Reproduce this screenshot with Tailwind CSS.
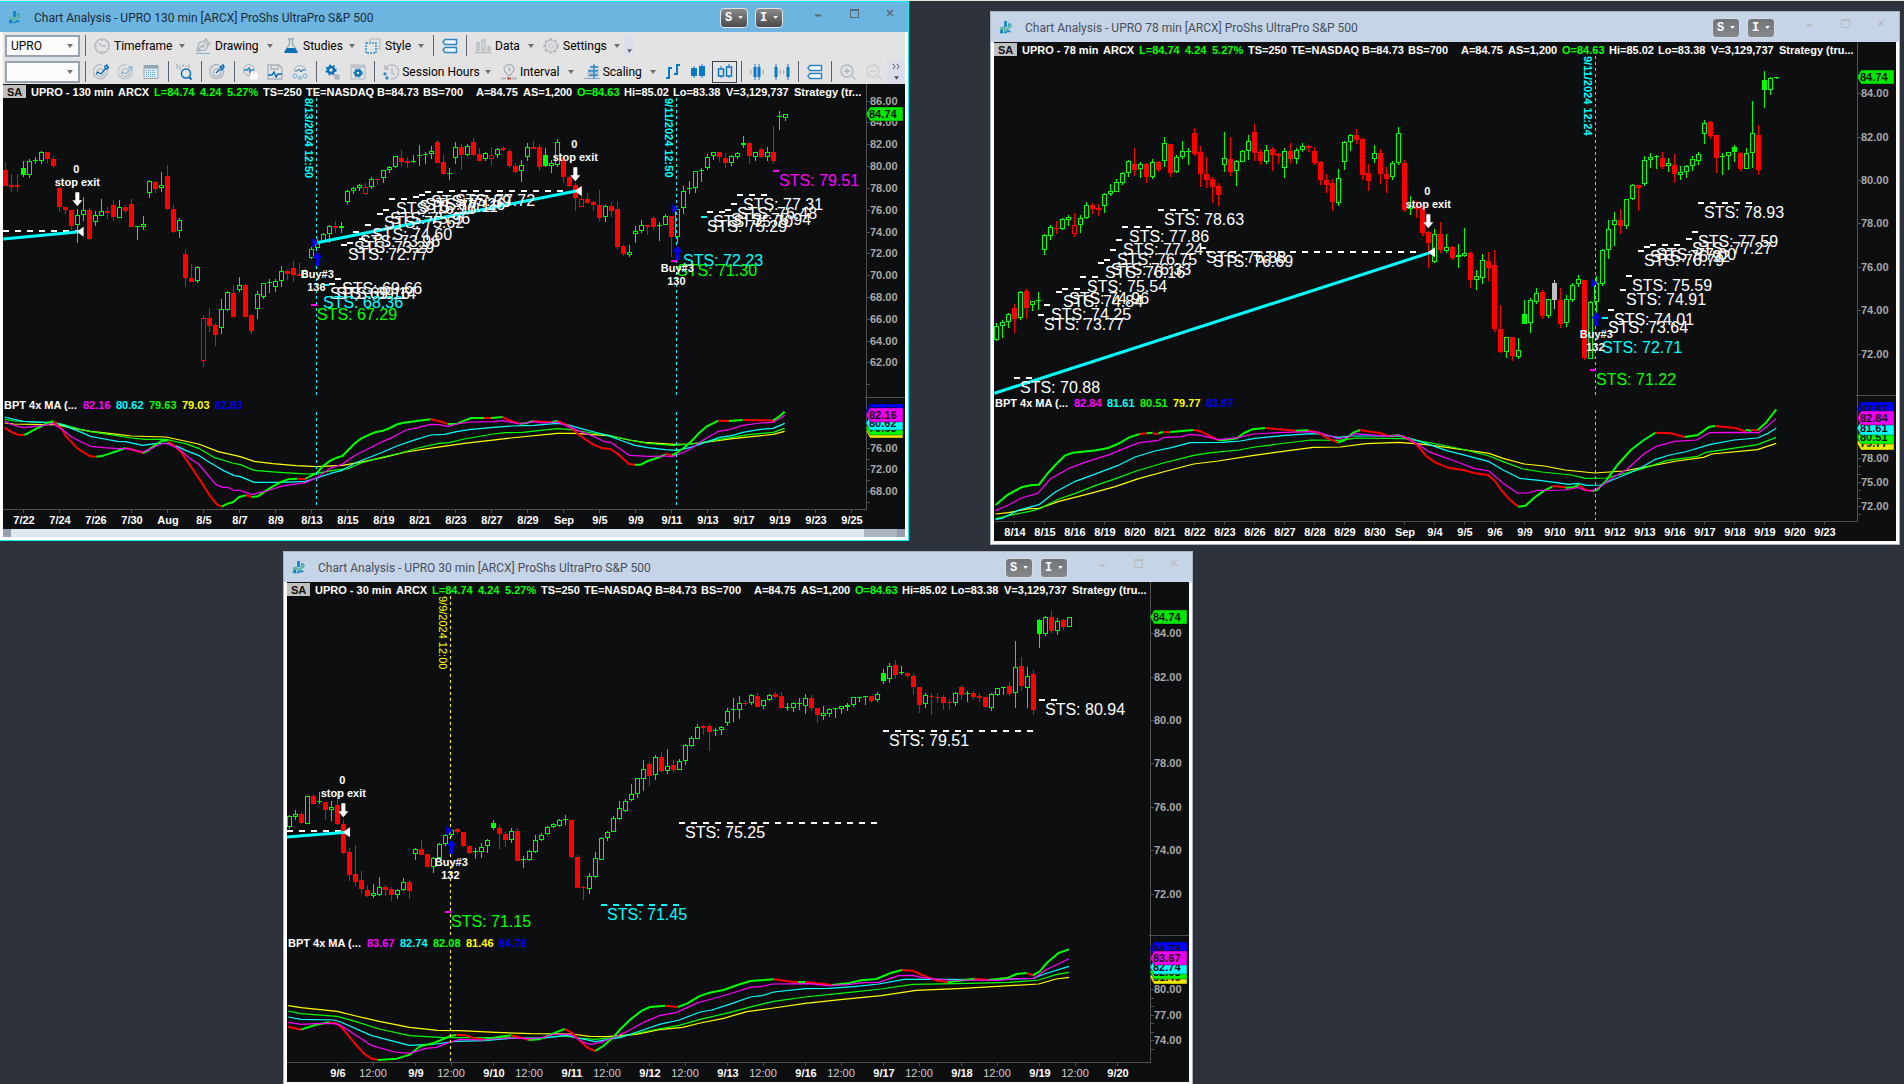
<!DOCTYPE html>
<html lang="en">
<head>
  <meta charset="UTF-8" />
  <meta name="viewport" content="width=device-width, initial-scale=1.0">
  <title>Chart Analysis - UPRO</title>
  <script src="https://cdn.jsdelivr.net/npm/@tailwindcss/browser@4"></script>
</head>
<body class="relative min-h-screen overflow-hidden bg-[#2e323b] border-t border-[#e4e4dc] font-[Roboto,'Noto_Sans',sans-serif] text-xs text-black">

  <svg width="0" height="0" class="absolute">
    <symbol id="logo" viewBox="0 0 16 16">
      <path d="M3 9v5M7.500 1v7M7.500 12v3M12 4v5" stroke="#0a84c8" stroke-width="3" fill="none"/>
      <path d="M1 10l4-1 3 3 6-7" stroke="#5fb8a8" stroke-width="3" fill="none"/>
      <path d="M9 13h4M1 14h4" stroke="#0a84c8" stroke-width="2"/>
    </symbol>
    <symbol id="down" viewBox="0 0 6 4"><path d="M0 0h6L3 4z" fill="currentColor"/></symbol>
    <symbol id="rows" viewBox="0 0 16 16">
      <path d="M3 1.500h11.500v5H3L1 4zM3 9.500h11.500v5H3L1 12z" fill="#f4f8fb" stroke="#2f86c0" stroke-width="1.500"/>
    </symbol>
  </svg>

  <!-- 130 min -->
  <section class="absolute left-0 top-0 w-[909px] border-t border-r border-b border-[#00f4f8] bg-white pb-[3px]">
    <header class="flex h-[30px] items-center bg-[#6cb5e0] pl-2">
      <svg class="size-[14px]"><use href="#logo"/></svg>
      <h1 class="ml-3 pt-px text-[#1c2a38]">Chart Analysis - UPRO 130 min [ARCX] ProShs UltraPro S&amp;P 500</h1>
      <div class="ml-auto flex items-center gap-[7px] pt-px">
        <button class="flex h-5 w-7 items-center justify-center gap-[6px] rounded-sm border border-[#e0e4e8] bg-gradient-to-b from-[#8a8a8a] to-[#4a4a4a] font-['Liberation_Mono',monospace] font-bold text-white">S<svg class="h-[3px] w-[5px]"><use href="#down"/></svg></button>
        <button class="flex h-5 w-7 items-center justify-center gap-[6px] rounded-sm border border-[#e0e4e8] bg-gradient-to-b from-[#8a8a8a] to-[#4a4a4a] font-['Liberation_Mono',monospace] font-bold text-white">I<svg class="h-[3px] w-[5px]"><use href="#down"/></svg></button>
      </div>
      <div class="ml-[17px] mb-2 flex items-center text-[#5c6770]">
        <button class="w-9 px-[15px]" aria-label="Minimize"><svg class="h-2 w-[6px]" viewBox="0 0 6 8"><path d="M0 6.500h6" stroke="currentColor" stroke-width="2"/></svg></button>
        <button class="w-9 px-[14px]" aria-label="Maximize"><svg class="size-[9px]" viewBox="0 0 9 9"><path d="M.5 1h8v7.500h-8z" fill="none" stroke="currentColor"/><path d="M0 1h9" stroke="currentColor" stroke-width="2"/></svg></button>
        <button class="w-9 px-[14px]" aria-label="Close"><svg class="size-2" viewBox="0 0 8 8"><path d="M1 1l6 6M7 1L1 7" stroke="currentColor" stroke-width="1.500"/></svg></button>
      </div>
    </header>

    <div class="ml-[3px] mr-[3px] bg-[#e3e3e3]">
      <nav class="flex h-[27px] items-center pl-[2px]">
        <div class="flex h-[22px] w-[75px] items-center border-2 border-[#97a3b5] bg-[#fcfcfc]">
          <input aria-label="Symbol" value="UPRO" class="w-[52px] pl-1 outline-none">
          <svg class="ml-2 h-1 w-[6px] text-[#707070]"><use href="#down"/></svg>
        </div>
        <span class="ml-[5px] mr-2 h-[21px] w-px bg-[#5a6370]"></span>
        <button class="flex h-6 w-[101px] items-center gap-1">
          <svg class="size-4" viewBox="0 0 16 16" fill="none" stroke="#b4bac2" stroke-width="1.500"><circle cx="8" cy="8" r="7"/><path d="M4 5l4 3h4M8 2v1M8 13v1M2 8h1"/></svg>
          Timeframe<svg class="ml-auto mr-[10px] h-1 w-[6px] text-[#707070]"><use href="#down"/></svg>
        </button>
        <button class="flex h-6 w-[88px] items-center gap-1">
          <svg class="size-4" viewBox="0 0 16 16" fill="none" stroke="#a9b2bc" stroke-width="1.300"><path d="M2 13l2-8 5-2 4 4-2 5zM2 13l5-5M9 3l2-2 4 5-2 1"/><circle cx="8" cy="8" r="1"/><path d="M1 15.500h14" stroke="#7fb4dc"/></svg>
          Drawing<svg class="ml-auto mr-[10px] h-1 w-[6px] text-[#707070]"><use href="#down"/></svg>
        </button>
        <button class="flex h-6 w-[82px] items-center gap-1">
          <svg class="size-4" viewBox="0 0 16 16"><path d="M5 1h6M6.500 1v5L2 13h12L9.500 6V1" fill="none" stroke="#97a9b8" stroke-width="1.300"/><path d="M4 10h8l3 5H1z" fill="#0a70b8"/></svg>
          Studies<svg class="ml-auto mr-[10px] h-1 w-[6px] text-[#707070]"><use href="#down"/></svg>
        </button>
        <button class="flex h-6 w-[68px] items-center gap-1">
          <svg class="size-4" viewBox="0 0 16 16" fill="none"><path d="M5 4V1h10v10h-3" stroke="#c0c6cc" stroke-width="1.500"/><path d="M1 5h10v10H1z" stroke="#2a94d8" stroke-width="1.500" stroke-dasharray="2 1"/></svg>
          Style<svg class="ml-auto mr-[9px] h-1 w-[6px] text-[#707070]"><use href="#down"/></svg>
        </button>
        <span class="mr-2 h-[21px] w-px bg-[#5a6370]"></span>
        <button aria-label="Layout"><svg class="size-4"><use href="#rows"/></svg></button>
        <span class="ml-2 mr-2 h-[21px] w-px bg-[#5a6370]"></span>
        <button class="flex h-6 w-[68px] items-center gap-1">
          <svg class="size-4" viewBox="0 0 16 16" fill="none" stroke="#b4bac2" stroke-width="1.300"><path d="M2 5h2v7H2zM7 2h3v10H7zM13 9h2v3h-2zM0 14.500h16"/></svg>
          Data<svg class="ml-auto mr-[9px] h-1 w-[6px] text-[#707070]"><use href="#down"/></svg>
        </button>
        <button class="flex h-6 w-[81px] items-center gap-1">
          <svg class="size-4" viewBox="0 0 16 16" fill="none" stroke="#b4bac2"><circle cx="8" cy="8" r="6.800" stroke-width="2" stroke-dasharray="3 2"/><circle cx="8" cy="8" r="5.500"/><circle cx="8" cy="8" r="2.300"/></svg>
          Settings<svg class="ml-auto mr-1 h-1 w-[6px] text-[#707070]"><use href="#down"/></svg>
        </button>
        <button aria-label="More" class="flex h-[22px] w-[10px] items-end justify-center bg-[#dcdeee] pb-1"><svg class="h-1 w-[5px] text-[#606060]"><use href="#down"/></svg></button>
      </nav>
      <nav class="flex h-[25px] items-center pl-[2px]">
        <div class="flex h-[22px] w-[75px] items-center border-2 border-[#97a3b5] bg-[#fcfcfc]">
          <input aria-label="Template" class="w-[52px] pl-1 outline-none">
          <svg class="ml-2 h-1 w-[6px] text-[#707070]"><use href="#down"/></svg>
        </div>
        <span class="ml-[5px] mr-[3px] h-[21px] w-px bg-[#5a6370]"></span>
        <button aria-label="Trade line" class="flex w-[25px] justify-center"><svg class="size-4" viewBox="0 0 16 16" fill="none" stroke="#b4bac2" stroke-width="1.300"><path d="M14 6A7 7 0 1 1 9 1"/><circle cx="7.500" cy="8.500" r="3.800"/><path d="M3 10l2-2 3 2 4-5M12 5V2l2-1v2h2l-2 2z" stroke="#0a70b8"/></svg></button>
        <button aria-label="Trade arrow" class="flex w-[25px] justify-center"><svg class="size-4" viewBox="0 0 16 16" fill="none" stroke="#bdc3ca" stroke-width="1.300"><path d="M14 7A7 7 0 1 1 9 1"/><circle cx="7.500" cy="8.500" r="3.800"/><path d="M3 10l2-2 3 2 6-7M10 3h4v4" stroke="#8fbbd8"/></svg></button>
        <button aria-label="Grid" class="flex w-[25px] justify-center"><svg class="size-4" viewBox="0 0 16 16" fill="none"><path d="M1 1.500h14v13H1z" fill="#dfe9f1" stroke="#98a6b2"/><path d="M1 3h14" stroke="#8fa5b5" stroke-width="3"/><path d="M3 6.500h10M3 8.500h10M3 10.500h10M3 12.500h10" stroke="#5da4d4" stroke-dasharray="1 1"/></svg></button>
        <span class="ml-1 mr-[3px] h-[21px] w-px bg-[#5a6370]"></span>
        <button aria-label="Find bars" class="flex w-[25px] justify-center"><svg class="size-4" viewBox="0 0 16 16" fill="none"><path d="M1 0v5M4 1v5M7 0v3M10 1v2M13 0v5" stroke="#9aa6b0"/><circle cx="10" cy="9.500" r="4.500" stroke="#0a70b8" stroke-width="1.500"/><path d="M13 13l2.500 2.500" stroke="#0a70b8" stroke-width="2"/></svg></button>
        <span class="ml-1 mr-[3px] h-[21px] w-px bg-[#5a6370]"></span>
        <button aria-label="Target" class="flex w-[25px] justify-center"><svg class="size-4" viewBox="0 0 16 16" fill="none" stroke="#a9b2bc" stroke-width="1.300"><path d="M14.500 6A7 7 0 1 1 10 1"/><circle cx="8" cy="8.500" r="3.800"/><path d="M7 9l6-6M11 3l3-2 1 2-2 3z" stroke="#0a70b8" stroke-width="1.500"/></svg></button>
        <span class="ml-1 mr-[3px] h-[21px] w-px bg-[#5a6370]"></span>
        <button aria-label="Analyze lock" class="flex w-[25px] justify-center"><svg class="size-4" viewBox="0 0 16 16" fill="none" stroke="#a9b2bc"><circle cx="7" cy="6" r="5.500"/><path d="M2 6h3l2-2 1 4 1-2h3" stroke="#2b88c6" stroke-width="1.500"/><path d="M9 10h6v5H9z" fill="#fff" stroke="#fff"/><path d="M10 10V8h4v2" stroke="#fff"/></svg></button>
        <button aria-label="Save analysis" class="flex w-[25px] justify-center"><svg class="size-4" viewBox="0 0 16 16" fill="none" stroke="#a9b2bc" stroke-width="1.300"><path d="M1 1h11l3 3v11H1zM4 1v4h7V1"/><path d="M1 11h4l2-3 2 5 2-3h4" stroke="#0a70b8" stroke-width="1.500"/></svg></button>
        <button aria-label="Analysis group" class="flex w-[25px] justify-center"><svg class="size-4" viewBox="0 0 16 16" fill="none" stroke="#a9b2bc"><path d="M2 7a6 5.500 0 0 1 12 0"/><path d="M3 7h2l2-2 2 3 1-2h3" stroke="#0a70b8"/><circle cx="3" cy="12" r="2" stroke="#6faed6"/><circle cx="8" cy="14" r="1.500" stroke="#6faed6"/><circle cx="13" cy="12" r="2" stroke="#6faed6"/></svg></button>
        <span class="ml-1 mr-[3px] h-[21px] w-px bg-[#5a6370]"></span>
        <button aria-label="Number options" class="flex w-[25px] justify-center"><svg class="size-4" viewBox="0 0 16 16" fill="none"><circle cx="6" cy="6" r="3" stroke="#0a70b8" stroke-width="2.500"/><circle cx="6" cy="6" r="4.800" stroke="#0a70b8" stroke-width="1.500" stroke-dasharray="2 2"/><path d="M9 12h6M9 14h6M11 10v6M13 10v6" stroke="#9aa6b0"/></svg></button>
        <button aria-label="Window options" class="flex w-[25px] justify-center"><svg class="size-4" viewBox="0 0 16 16" fill="none"><path d="M1 1h14v14H1z" stroke="#a9b2bc"/><path d="M1 3h14" stroke="#b9c2ca" stroke-width="2"/><circle cx="8" cy="9" r="2.500" stroke="#0a70b8" stroke-width="2.500"/><circle cx="8" cy="9" r="4.200" stroke="#0a70b8" stroke-dasharray="2 2"/></svg></button>
        <span class="ml-1 mr-2 h-[21px] w-px bg-[#5a6370]"></span>
        <button class="flex h-6 w-[118px] items-center gap-[3px] whitespace-nowrap">
          <svg class="size-4 shrink-0" viewBox="0 0 16 16" fill="none" stroke="#aeb5bd" stroke-width="1.300"><path d="M3 4a7 7 0 1 1 5 11M2 1v4h4M9 4v5l3 2"/><circle cx="2" cy="10" r="1" stroke="#2b88c6"/><circle cx="4" cy="14" r="1" stroke="#2b88c6"/></svg>
          Session Hours<svg class="ml-auto mr-[10px] h-1 w-[6px] text-[#707070]"><use href="#down"/></svg>
        </button>
        <button class="flex h-6 w-[83px] items-center gap-[3px]">
          <svg class="size-4" viewBox="0 0 16 16" fill="none"><path d="M8 12c-3-3-5-4-5-7a5 4.500 0 0 1 10 0c0 3-2 4-5 7zM8 3v3h2" stroke="#a9b2bc" stroke-width="1.300"/><path d="M0 14.500h5M11 14.500h5" stroke="#b4bac2" stroke-width="2"/><path d="M6 14.500h4" stroke="#e23a2a" stroke-width="2"/></svg>
          Interval<svg class="ml-auto mr-[10px] h-1 w-[6px] text-[#707070]"><use href="#down"/></svg>
        </button>
        <button class="flex h-6 w-[77px] items-center gap-[3px]">
          <svg class="size-4" viewBox="0 0 16 16" fill="none"><path d="M0 14.500h16M3 12h12M3 9h12M4 6h11M6 3h9" stroke="#8fa9bd"/><path d="M10 0v15M6 3h8M4 7h10M5 11h9" stroke="#2b88c6" stroke-width="1.300"/></svg>
          Scaling<svg class="ml-auto mr-[5px] h-1 w-[6px] text-[#707070]"><use href="#down"/></svg>
        </button>
        <button aria-label="Bars" class="flex w-[25px] justify-center"><svg class="size-4" viewBox="0 0 16 16" fill="none" stroke="#0a78c2" stroke-width="2"><path d="M1 14h3V4h3M9 10h3V1h3"/></svg></button>
        <button aria-label="Solid candles" class="mr-[2px] flex w-[25px] justify-center"><svg class="size-4" viewBox="0 0 16 16"><path d="M4 2v12M12 0v14" stroke="#0a78c2"/><path d="M1 4h6v8H1zM9 2h6v10H9z" fill="#0a78c2"/></svg></button>
        <button aria-label="Hollow candles" class="flex h-[22px] w-[25px] items-center justify-center border border-[#39424e]"><svg class="size-4" viewBox="0 0 16 16"><path d="M4 2v12M12 0v14" stroke="#0a78c2"/><path d="M1.500 5h5v7h-5zM9.500 3h5v9h-5z" fill="#e3e3e3" stroke="#0a78c2" stroke-width="1.500"/></svg></button>
        <span class="ml-1 mr-[2px] h-[21px] w-px bg-[#5a6370]"></span>
        <button aria-label="Compress" class="flex w-[25px] justify-center"><svg class="size-4" viewBox="0 0 16 16"><path d="M6 0v16M10 0v16" stroke="#0a78c2"/><path d="M4.500 3h3v10h-3zM8.500 3h3v10h-3z" fill="#0a78c2"/><path d="M1 5v6l2-3zM15 5v6l-2-3z" fill="#a9b2bc"/></svg></button>
        <button aria-label="Expand" class="flex w-[25px] justify-center"><svg class="size-4" viewBox="0 0 16 16"><path d="M2 0v16M14 0v16" stroke="#0a78c2"/><path d="M.5 3h3v10h-3zM12.500 3h3v10h-3z" fill="#0a78c2"/><path d="M7 5v6L5 8zM9 5v6l2-3z" fill="#a9b2bc"/></svg></button>
        <span class="ml-1 mr-[8px] h-[21px] w-px bg-[#5a6370]"></span>
        <button aria-label="Panels"><svg class="size-4"><use href="#rows"/></svg></button>
        <span class="ml-2 mr-[3px] h-[21px] w-px bg-[#5a6370]"></span>
        <button aria-label="Zoom in" class="flex w-[26px] justify-center"><svg class="size-4" viewBox="0 0 16 16" fill="none" stroke="#b0b7be" stroke-width="1.300"><circle cx="7" cy="7" r="6"/><path d="M12 12l3.500 3.500M4 7h6M7 4v6"/></svg></button>
        <button aria-label="Zoom out" class="flex w-[26px] justify-center"><svg class="size-4" viewBox="0 0 16 16" fill="none" stroke="#c9cdd1" stroke-width="1.300"><circle cx="7" cy="7" r="6"/><path d="M12 12l3.500 3.500M4 7h6"/></svg></button>
        <button aria-label="More tools" class="ml-auto flex h-6 w-[18px] flex-col items-center justify-between bg-[#dcdeee] py-1 text-[#505050]"><svg class="h-[5px] w-2" viewBox="0 0 8 5" fill="none" stroke="currentColor"><path d="M1 0l2 2.500L1 5M5 0l2 2.500L5 5"/></svg><svg class="h-1 w-[5px]"><use href="#down"/></svg></button>
      </nav>
      <svg id="c130" class="block w-full bg-[#0d0e10]" viewBox="3 84 902 445"></svg>
      <div class="flex h-2 bg-[#dfe6ef]">
        <span class="w-2 bg-[#94a0ae]"></span>
        <span class="ml-auto w-[33px] bg-[#abb5bf]"></span>
        <span class="w-2 bg-[#94a0ae]"></span>
      </div>
    </div>
  </section>

  <!-- 78 min -->
  <section class="absolute left-[990px] top-[10px] w-[910px] border border-[#a9b4c2] bg-white pb-[3px]">
    <header class="flex h-[30px] items-center bg-[#c6d4e7] pl-2">
      <svg class="size-[14px]"><use href="#logo"/></svg>
      <h1 class="ml-3 pt-px text-[#47505c]">Chart Analysis - UPRO 78 min [ARCX] ProShs UltraPro S&amp;P 500</h1>
      <div class="ml-auto flex items-center gap-[7px] pt-px">
        <button class="flex h-5 w-7 items-center justify-center gap-[6px] rounded-sm border border-[#d8dce0] bg-gradient-to-b from-[#70757a] to-[#85888a] font-['Liberation_Mono',monospace] font-bold text-white">S<svg class="h-[3px] w-[5px]"><use href="#down"/></svg></button>
        <button class="flex h-5 w-7 items-center justify-center gap-[6px] rounded-sm border border-[#d8dce0] bg-gradient-to-b from-[#70757a] to-[#85888a] font-['Liberation_Mono',monospace] font-bold text-white">I<svg class="h-[3px] w-[5px]"><use href="#down"/></svg></button>
      </div>
      <div class="ml-4 mb-2 flex items-center text-[#b9bdc2]">
        <button class="w-9 px-[15px]" aria-label="Minimize"><svg class="h-2 w-[6px]" viewBox="0 0 6 8"><path d="M0 6.500h6" stroke="currentColor" stroke-width="2"/></svg></button>
        <button class="w-9 px-[14px]" aria-label="Maximize"><svg class="size-[9px]" viewBox="0 0 9 9"><path d="M.5 1h8v7.500h-8z" fill="none" stroke="currentColor"/><path d="M0 1h9" stroke="currentColor" stroke-width="2"/></svg></button>
        <button class="w-9 px-[14px]" aria-label="Close"><svg class="size-2" viewBox="0 0 8 8"><path d="M1 1l6 6M7 1L1 7" stroke="currentColor" stroke-width="1.500"/></svg></button>
      </div>
    </header>
    <div class="mx-[3px]"><svg id="c78" class="block w-full bg-[#0d0e10]" viewBox="994 42 902 499"></svg></div>
  </section>

  <!-- 30 min -->
  <section class="absolute left-[283px] top-[550px] w-[910px] border border-[#a9b4c2] bg-white pb-[3px]">
    <header class="flex h-[30px] items-center bg-[#c6d4e7] pl-2">
      <svg class="size-[14px]"><use href="#logo"/></svg>
      <h1 class="ml-3 pt-px text-[#47505c]">Chart Analysis - UPRO 30 min [ARCX] ProShs UltraPro S&amp;P 500</h1>
      <div class="ml-auto flex items-center gap-[7px] pt-px">
        <button class="flex h-5 w-7 items-center justify-center gap-[6px] rounded-sm border border-[#d8dce0] bg-gradient-to-b from-[#70757a] to-[#85888a] font-['Liberation_Mono',monospace] font-bold text-white">S<svg class="h-[3px] w-[5px]"><use href="#down"/></svg></button>
        <button class="flex h-5 w-7 items-center justify-center gap-[6px] rounded-sm border border-[#d8dce0] bg-gradient-to-b from-[#70757a] to-[#85888a] font-['Liberation_Mono',monospace] font-bold text-white">I<svg class="h-[3px] w-[5px]"><use href="#down"/></svg></button>
      </div>
      <div class="ml-4 mb-2 flex items-center text-[#b9bdc2]">
        <button class="w-9 px-[15px]" aria-label="Minimize"><svg class="h-2 w-[6px]" viewBox="0 0 6 8"><path d="M0 6.500h6" stroke="currentColor" stroke-width="2"/></svg></button>
        <button class="w-9 px-[14px]" aria-label="Maximize"><svg class="size-[9px]" viewBox="0 0 9 9"><path d="M.5 1h8v7.500h-8z" fill="none" stroke="currentColor"/><path d="M0 1h9" stroke="currentColor" stroke-width="2"/></svg></button>
        <button class="w-9 px-[14px]" aria-label="Close"><svg class="size-2" viewBox="0 0 8 8"><path d="M1 1l6 6M7 1L1 7" stroke="currentColor" stroke-width="1.500"/></svg></button>
      </div>
    </header>
    <div class="mx-[3px]"><svg id="c30" class="block w-full bg-[#0d0e10]" viewBox="287 582 902 500"></svg></div>
  </section>

  <script>
    const G = "#00ff00", R = "#ff0000", C = "#00ffff", M = "#ff00ff", Y = "#ffff00", B = "#0000f0", W = "#ffffff";
    const SANS = "'Liberation Sans',Arial,sans-serif";

    const rect = (x, y, w, h, fill) => `<rect x="${x}" y="${y}" width="${w}" height="${h}" fill="${fill}" shape-rendering="crispEdges"/>`;
    const bold = (x, y, s, fill, anchor = "start") => `<text x="${x}" y="${y}" font-family="${SANS}" font-size="11" font-weight="700" fill="${fill}" text-anchor="${anchor}">${s}</text>`;

    // one bar: "high top bottom low kind", heights in thirds of a pixel below the plot origin
    function candles(c) {
      return c.bars.trim().split(/\s*,\s*/).map((bar, i) => {
        const [h, t, b, l, kind] = bar.split(" ");
        const y = v => c.oy + Math.round(v / 3);
        const x = c.first + 6 * i;
        const col = kind === "w" ? "#c0c0c0" : kind.toLowerCase() === "g" ? G : R;
        const hollow = kind === "g" || kind === "R";
        const bh = Math.max(1, y(b) - y(t));
        let s = "";
        if (y(t) > y(h)) s += rect(x, y(h), 1, y(t) - y(h), col);
        if (y(l) > y(t) + bh) s += rect(x, y(t) + bh, 1, y(l) - y(t) - bh, col);
        s += hollow && bh > 2
          ? `<rect x="${x - 1.5}" y="${y(t) + 0.5}" width="4" height="${bh - 1}" fill="none" stroke="${col}" shape-rendering="crispEdges"/>`
          : rect(x - 2, y(t), 5, bh, col);
        return s;
      }).join("");
    }

    function draw(c) {
      const [vx, vy, vw, vh] = document.getElementById(c.id).getAttribute("viewBox").split(" ").map(Number);
      const X = v => c.ox + v / 3, Yy = v => c.oy + v / 3;
      const ax = vx + 863;
      let s = "";

      // axes
      s += rect(ax, vy, 1, c.base - vy, "#505050") + rect(vx, c.base, 864, 1, "#505050") + rect(ax - 1, c.split, 40, 1, "#505050");
      c.prices.forEach(([p, y]) => { s += rect(ax, y, 4, 1, "#505050") + bold(ax + 4, y + 4, p, "#a8a8a8"); });
      c.dates.forEach(([d, x, minor]) => {
        s += rect(x, c.base, 1, 4, "#505050");
        s += minor
          ? `<text x="${x}" y="${c.base + 15}" font-family="${SANS}" font-size="11" fill="#d0d0d0" text-anchor="middle">${d}</text>`
          : bold(x + 1, c.base + 15, d, W, "middle");
      });

      // moving averages
      const [mx, my, mw, mh, bw, bh] = c.ma.box;
      const line = (pts, col, w) => `<polyline points="${pts}" fill="none" stroke="${col}" stroke-width="${w}" stroke-linejoin="round" vector-effect="non-scaling-stroke"/>`;
      s += `<svg x="${mx}" y="${my}" width="${mw}" height="${mh}" viewBox="0 0 ${bw} ${bh}" preserveAspectRatio="none">`;
      s += line(c.ma.y, Y, 1.2) + line(c.ma.g, G, 1.2) + line(c.ma.c, C, 1.2);
      c.ma.fast.split("|").forEach(seg => {
        const [k, ...pts] = seg.trim().split(" ");
        s += line(pts.join(" "), k === "g" ? G : R, 2);
      });
      s += line(c.ma.m, M, 1.2) + `</svg>`;

      // vertical markers
      c.vlines.forEach(([x, label, col, weight]) => {
        s += `<path d="M${x + 0.5} ${vy + 14}V${c.split}M${x + 0.5} ${c.split + 15}V${c.base - 1}" stroke="${col}" stroke-dasharray="3 3"/>`;
        s += `<text transform="translate(${x - 11} ${vy + 14}) rotate(90)" font-family="${SANS}" font-size="11" font-weight="${weight}" fill="${col}">${label}</text>`;
      });

      s += candles(c);

      c.dashes.forEach(([x, y, n, col]) => {
        for (let i = 0; i < n; i++) s += rect(Math.round(X(x + 36 * i)), Math.round(Yy(y)) - 1, 6, 2, col || W);
      });
      c.trend.forEach(([x1, y1, x2, y2]) => {
        s += `<path d="M${X(x1)} ${Yy(y1)}L${X(x2)} ${Yy(y2)}" stroke="${C}" stroke-width="3"/>`;
      });
      c.sts.forEach(([x, y, p, col]) => {
        s += `<text x="${Math.round(X(x))}" y="${Math.round(Yy(y))}" font-family="${SANS}" font-size="16" fill="${col || W}">STS: ${p}</text>`;
      });
      c.exits.forEach(([x, y, tx, ty]) => {
        const a = X(x), b = Yy(y), u = X(tx), v = Yy(ty);
        s += bold(a - 1, b - 19, "0", W, "middle") + bold(a, b - 6, "stop exit", W, "middle");
        s += `<path d="M${a - 2} ${b}h4v8h3l-5 6-5-6h3z" fill="${W}"/><path d="M${u - 4} ${v}l7-5v10z" fill="${W}"/>`;
      });
      c.buys.forEach(([x, y, ty, qty]) => {
        const a = X(x), b = Yy(y), v = Yy(ty);
        s += `<path d="M${a - 2} ${b + 14}h4V${b + 6}h3l-5-6-5 6h3zM${a - 5} ${v - 5}v10l6-5z" fill="${B}"/>`;
        s += bold(a, b + 26, "Buy#3", W, "middle") + bold(a - 1, b + 39, qty, W, "middle");
      });

      // status line
      s += rect(vx, vy + 1, 23, 13, "#c0c0c0") + bold(vx + 4, vy + 12, "SA", "#101010");
      const d = c.wide ? 6 : 0;
      [[28, c.name], [109 + d, "ARCX"], [145 + d, "L=84.74", G], [191 + d, "4.24", G], [218 + d, "5.27%", G], [254 + d, "TS=250"],
       [297 + d, "TE=NASDAQ"], [368 + d, "B=84.73"], [414 + d, "BS=700"], [467 + d, "A=84.75"], [514 + d, "AS=1,200"],
       [568 + d, "O=84.63", G], [615 + d, "Hi=85.02"], [664 + d, "Lo=83.38"], [717 + d, "V=3,129,737"],
       [785 + d, c.wide ? "Strategy (tr..." : "Strategy (tru..."]].forEach(([x, t, col]) => { s += bold(vx + x, vy + 12, t, col || W); });

      // study line
      s += bold(vx + 1, c.split + 12, "BPT 4x MA (...", W);
      c.values.forEach((t, i) => { s += bold(vx + 80 + 33 * i, c.split + 12, t, [M, C, G, Y, B][i]); });

      // price tags
      c.tags.forEach(([y, t, col]) => {
        s += `<path d="M${ax} ${y}l4-7h33v14h-33z" fill="${col}" stroke="#000" stroke-opacity=".35"/>` + bold(ax + 3, y + 4, t, "#101010");
      });
      document.getElementById(c.id).innerHTML = s;
    }

    const days = (list, start, step) => list.split(" ").map((d, i) => [d, start + step * i]);
    const scale = [["84.00", 93], ["82.00", 137], ["80.00", 180], ["78.00", 223], ["76.00", 267], ["74.00", 310], ["72.00", 354]];

    draw({
      id: "c130", name: "UPRO - 130 min", wide: true, ox: 0, oy: 90, first: 5, base: 509, split: 397,
      values: ["82.16", "80.62", "79.63", "79.03", "82.83"],
      prices: [["86.00", 101], ["84.00", 122], ["82.00", 144], ["80.00", 166], ["78.00", 188], ["76.00", 210], ["74.00", 232], ["72.00", 253], ["70.00", 275], ["68.00", 297], ["66.00", 319], ["64.00", 341], ["62.00", 362], ["", 384], ["76.00", 448], ["", 459], ["72.00", 469], ["", 480], ["68.00", 491], ["", 502]],
      dates: days("7/22 7/24 7/26 7/30 Aug 8/5 8/7 8/9 8/13 8/15 8/19 8/21 8/23 8/27 8/29 Sep 9/5 9/9 9/11 9/13 9/17 9/19 9/23 9/25", 23, 36),
      vlines: [[316, "8/13/2024 12:50", C, 700], [676, "9/11/2024 12:50", C, 700]],
      tags: [[114, "84.74", "#00e800"], [431, "79.03", "#e8e800"], [428, "79.63", "#00ff00"], [411, "82.83", "#0000ff"], [423, "80.62", "#00ffff"], [415, "82.16", "#f000f0"]],
      bars: `216 240 287 287 r,252 286 292 305 r,252 286 292 305 r,213 235 255 262 G,207 214 255 263 g,201 210 213 221 g,183 187 214 221 g,186 186 208 220 r,199 207 228 234 r,292 295 350 365 r,
        351 351 361 371 r,360 360 408 420 r,357 376 404 459 g,322 360 376 392 g,355 360 446 450 r,364 376 395 407 g,328 364 377 377 g,351 363 369 388 r,331 346 380 392 r,331 352 383 383 g,
        346 352 363 369 r,328 343 412 412 r,409 409 411 449 g,378 402 410 419 g,270 274 308 325 g,274 276 296 310 r,246 285 293 305 g,225 258 356 359 r,346 357 425 429 r,385 391 424 444 g,
        478 492 563 590 r,522 563 575 575 r,528 532 573 578 g,676 685 812 830 R,655 685 707 726 r,700 706 734 767 r,626 658 715 731 g,604 607 659 662 g,586 610 680 680 r,561 586 599 605 g,
        583 586 680 680 r,673 676 722 731 r,604 613 658 686 g,580 580 620 626 g,568 575 578 610 g,567 574 591 605 g,528 544 574 590 g,541 544 551 569 r,514 535 554 575 r,519 552 558 558 r,
        537 543 562 565 g,472 476 503 507 g,447 455 475 475 g,430 433 455 455 g,404 407 433 460 g,393 409 415 430 r,397 409 415 430 g,300 304 335 341 g,291 293 304 312 g,283 286 293 304 g,
        280 292 311 315 R,262 268 292 298 g,265 267 271 285 r,240 241 265 278 g,229 230 241 250 g,198 199 230 234 g,181 205 216 232 r,201 213 218 234 r,196 213 215 218 g,166 195 198 228 g,
        187 191 196 222 g,169 184 192 207 g,150 156 218 220 r,195 216 253 256 r,235 249 252 270 g,156 172 205 222 g,162 172 195 240 r,163 169 195 198 g,145 157 195 199 r,175 192 212 213 r,
        186 190 208 214 g,172 196 208 228 R,174 178 196 204 g,172 174 180 184 r,178 184 228 234 r,220 228 245 249 r,210 226 244 276 g,160 172 201 214 g,154 171 176 176 r,162 172 231 244 r,
        174 196 228 231 G,210 219 228 248 g,148 156 224 232 g,198 205 262 280 r,258 262 288 292 r,280 285 323 362 r,292 328 352 352 R,309 328 338 342 r,333 337 344 362 r,300 346 383 393 r,
        344 349 380 396 g,336 348 362 382 r,333 358 472 480 r,465 468 491 498 r,465 486 495 500 g,408 424 433 460 g,390 406 424 430 g,405 405 410 436 r,378 384 410 421 r,397 404 407 453 g,
        373 378 404 406 g,378 378 442 502 r,353 356 442 460 g,288 304 355 372 g,273 295 298 312 g,243 244 295 308 g,234 240 243 276 g,193 202 234 240 g,186 187 199 211 g,186 187 202 216 r,
        189 204 219 234 r,195 199 220 228 g,187 190 200 207 g,138 160 164 174 g,156 159 199 222 r,186 187 201 214 g,175 178 202 204 r,171 187 202 214 g,108 186 212 222 r,63 78 82 120 G,72 73 83 92 g`,
      trend: [[10, 447, 238, 425], [950, 458, 1728, 303]],
      exits: [[232, 307, 242, 425], [1726, 232, 1736, 303]],
      buys: [[952, 485, 458, "136"], [2032, 467, 356, "130"]],
      dashes: [[10, 424, 7], [1024, 465, 1], [1042, 458, 1], [1060, 426, 1], [1078, 447, 1], [1096, 405, 1], [1132, 372, 1], [1150, 360, 1], [1168, 326, 2], [1240, 321, 1], [1258, 315, 1], [1276, 305, 2], [1348, 302, 10],
        [1006, 567, 1], [988, 582, 1], [970, 585, 1, C], [933, 645, 1, M], [2319, 243, 1, M], [2212, 315, 3], [2194, 342, 1], [2176, 360, 1], [2122, 366, 2], [2104, 381, 1, C], [2014, 513, 1, M]],
      sts: [[1043, 510, "72.77"], [1062, 489, "73.29"], [1080, 471, "73.96"], [1116, 450, "74.60"], [1152, 415, "75.62"], [1170, 402, "75.96"], [1187, 372, "76.96"], [1258, 367, "77.11"], [1276, 361, "77.26"], [1294, 351, "77.59"], [1366, 348, "77.72"],
        [1025, 612, "69.66"], [1008, 626, "69.14"], [990, 628, "69.16"], [970, 654, "68.36", C], [952, 690, "67.29", G],
        [2338, 288, "79.51", M], [2230, 360, "77.31"], [2212, 388, "76.48"], [2194, 406, "75.94"], [2140, 411, "75.70"], [2122, 426, "75.29"], [2050, 527, "72.23", C], [2032, 557, "71.30", G]],
      ma: {
        box: [0, 380, 910, 165, 1568, 495],
        fast: "r 8,143 16,152 24,160 32,164 42,165|g 42,165 50,158 60,148 72,138 80,130 92,124|r 92,124 100,137 108,150 114,170 124,188 134,206 146,219 156,229 166,230|g 166,230 178,227 190,220 202,213 216,204|r 216,204 230,210 246,219|g 246,219 256,210 266,197 278,183 290,181|r 290,184 302,200 312,216 324,247 334,273 346,304 360,343 374,374 382,380|g 382,380 392,371 402,366 412,351 424,346|r 424,346 434,351|g 434,351 444,349 456,335 470,319 484,306 496,298 512,296|r 512,296 526,297|g 526,297 538,285 546,279 556,259 568,243 580,233 590,228 600,210 612,189 622,176 636,164 648,156 660,152 672,144 684,133 696,128 718,123 742,118|r 742,118 756,123 772,132|g 772,132 788,131 800,122 812,114 834,114|r 834,114 846,114|g 846,114 866,111|r 866,111 880,123 896,131|g 896,131 906,130 918,123|r 918,123 934,125 950,127|g 950,127 960,123|r 960,123 972,131 984,143 996,162 1010,180 1022,193 1038,205 1052,207 1066,224 1084,252 1094,254|g 1094,254 1104,254 1116,243 1132,234 1146,224|r 1146,221 1158,226|g 1158,226 1168,216 1178,204 1190,186 1204,160 1218,139 1238,122|r 1238,122 1256,123|g 1256,123 1280,120|r 1280,120 1320,121 1332,122|g 1332,122 1342,110 1352,95",
        m: "8,124 22,135 40,143 60,139 76,136 90,130 104,145 124,172 136,182 156,199 178,203 204,206 220,206 246,216 262,205 280,190 290,192 308,206 326,234 342,252 360,289 372,314 384,322 392,322 404,332 412,330 434,344 446,338 460,333 484,319 502,314 526,308 546,293 568,266 590,252 612,226 638,203 660,184 676,172 700,150 720,143 742,133 756,134 772,139 790,131 812,126 850,125 866,122 896,132 918,125 936,129 960,126 984,143 1004,157 1024,170 1040,184 1052,187 1068,206 1084,226 1118,229 1146,228 1158,230 1176,218 1190,206 1214,178 1238,154 1256,149 1280,136 1310,129 1332,127 1342,117 1352,106",
        c: "8,111 24,118 40,124 72,127 92,127 110,136 136,154 156,169 180,177 202,184 216,185 246,196 270,190 290,190 306,200 320,211 342,226 360,246 384,271 404,287 414,290 438,307 484,307 526,304 546,294 574,278 590,271 612,249 638,231 660,216 684,198 712,181 742,165 766,163 786,155 812,148 850,142 880,138 920,136 960,130 976,133 1000,145 1024,156 1048,167 1068,180 1094,196 1116,203 1146,209 1166,211 1190,202 1214,188 1240,172 1262,166 1280,157 1310,148 1332,145 1352,130",
        g: "8,118 24,123 60,126 92,128 110,134 136,147 156,155 190,164 226,174 250,178 286,178 306,186 320,191 342,205 370,233 400,249 414,254 438,271 482,277 510,280 530,282 546,280 574,271 600,266 622,249 660,231 690,219 720,204 756,190 774,188 800,177 850,162 870,158 900,157 960,146 984,149 1010,156 1048,165 1084,180 1116,190 1160,196 1190,192 1220,184 1250,175 1290,164 1332,157 1352,145",
        y: "8,129 24,132 76,134 96,133 120,143 156,154 188,160 226,168 286,171 310,180 342,192 376,215 414,230 438,244 470,251 510,257 546,260 590,256 620,247 660,233 700,216 740,205 800,190 830,184 880,174 960,160 990,160 1024,164 1052,168 1084,180 1110,187 1160,193 1190,192 1220,186 1262,176 1332,163 1352,154"
      }
    });

    draw({
      id: "c78", name: "UPRO - 78 min", ox: 985, oy: 0, first: 996, base: 521, split: 395,
      values: ["82.84", "81.61", "80.51", "79.77", "83.97"],
      prices: scale.concat([["78.00", 458], ["", 466], ["", 474], ["75.00", 482], ["", 490], ["", 498], ["72.00", 506], ["", 514]]),
      dates: days("8/14 8/15 8/16 8/19 8/20 8/21 8/22 8/23 8/26 8/27 8/28 8/29 8/30 Sep 9/4 9/5 9/6 9/9 9/10 9/11 9/12 9/13 9/16 9/17 9/18 9/19 9/20 9/23", 1014, 30),
      vlines: [[1595, "9/11/2024 12:24", C, 700]],
      tags: [[77, "84.74", "#00e800"], [443, "79.77", "#e8e800"], [437, "80.51", "#00ff00"], [409, "83.97", "#0000ff"], [428, "81.61", "#00ffff"], [418, "82.84", "#f000f0"]],
      bars: `969 979 1019 1022 g,960 967 978 1014 g,939 943 967 984 g,911 924 957 998 r,873 877 955 959 g,868 873 923 956 r,903 904 916 932 g,876 901 903 930 g,703 706 751 765 g,676 681 707 720 g,
        663 684 687 703 r,655 658 688 690 g,645 652 661 679 g,640 676 703 711 R,645 653 674 699 g,606 616 654 657 g,609 616 627 642 r,612 624 630 648 r,579 583 617 639 g,552 574 583 588 g,
        538 547 575 576 g,516 520 548 554 g,480 482 518 531 g,444 492 510 527 r,487 492 508 534 g,489 492 530 548 r,478 486 530 537 g,483 486 510 515 r,411 430 482 500 g,432 432 518 530 r,
        465 472 517 518 g,423 454 472 477 g,444 453 455 494 g,384 400 462 467 r,438 456 521 560 r,472 522 540 564 r,531 537 560 608 r,549 558 585 618 r,396 475 494 515 g,411 477 515 529 r,
        480 484 514 558 g,450 454 485 486 g,406 424 454 480 g,372 396 458 482 r,447 456 483 495 r,435 451 485 492 g,441 447 465 513 r,459 462 467 492 r,444 454 503 534 g,429 453 477 492 r,
        444 451 477 492 g,430 439 451 456 g,435 438 443 455 r,441 453 489 495 r,484 487 540 555 r,522 540 555 579 r,537 549 605 633 r,507 535 608 618 g,423 427 485 510 g,402 406 427 453 g,
        387 406 419 432 r,414 417 524 540 r,492 519 543 573 r,435 460 478 489 g,447 459 521 551 r,501 522 537 579 r,483 489 530 540 g,381 400 490 495 g,480 490 629 636 r,588 618 626 645 g,
        604 617 628 654 r,615 625 698 708 r,692 696 729 804 r,687 703 785 790 g,666 702 749 760 r,702 742 752 760 g,738 741 774 779 r,732 766 772 804 g,684 759 767 772 g,757 759 839 863 r,
        810 829 839 870 g,762 781 833 852 g,756 783 803 843 r,750 795 987 996 r,915 987 1055 1058 r,1011 1012 1055 1074 g,1011 1011 1067 1082 r,1014 1051 1070 1078 g,900 942 971 972 G,894 901 970 998 g,
        864 878 905 912 g,870 876 947 956 r,897 898 947 954 g,840 849 899 927 w,864 900 971 983 r,885 898 968 980 g,849 856 899 906 g,825 838 853 861 g,840 840 1073 1080 r,903 907 1076 1076 g,
        828 850 905 950 g,747 751 853 857 g,660 687 751 777 g,636 661 674 738 g,627 660 677 701 r,597 598 677 687 g,552 556 598 599 g,555 556 563 633 r,468 481 551 558 g,459 472 480 504 g,
        465 468 470 507 g,456 474 500 506 r,474 490 499 516 g,462 495 521 548 r,498 517 525 540 g,495 499 515 534 g,468 477 499 513 g,456 463 482 494 g,360 370 401 432 g,363 366 407 417 r,
        405 405 473 519 r,459 468 471 525 g,456 457 467 510 g,435 441 456 486 G,456 459 506 513 r,444 460 506 506 g,303 400 460 504 g,375 405 509 525 r,213 240 269 324 G,231 235 269 285 g,232 232 234 237 g`,
      trend: [[28, 1180, 1338, 757]],
      exits: [[1330, 643, 1341, 757]],
      buys: [[1834, 937, 850, "132"]],
      dashes: [[520, 630, 4], [412, 681, 3], [394, 720, 1], [376, 750, 1], [358, 780, 1], [340, 789, 1], [286, 831, 2], [232, 867, 2], [214, 876, 1], [178, 915, 1], [160, 945, 1], [88, 1134, 2], [646, 744, 1], [664, 757, 18],
        [2140, 609, 5], [2122, 696, 1], [2104, 717, 1], [1996, 735, 3], [1978, 741, 1], [1960, 753, 1], [1924, 828, 1], [1906, 870, 1], [1870, 930, 1], [1852, 954, 1, C], [1815, 1110, 1, M]],
      sts: [[538, 675, "78.63"], [431, 726, "77.86"], [413, 765, "77.24"], [395, 795, "76.75"], [377, 825, "76.33"], [359, 833, "76.16"], [305, 876, "75.54"], [251, 913, "74.96"], [233, 920, "74.84"], [197, 960, "74.25"], [178, 989, "73.77"], [106, 1178, "70.88"], [664, 789, "76.88"], [683, 800, "76.69"],
        [2158, 654, "78.93"], [2140, 740, "77.59"], [2122, 762, "77.27"], [2014, 780, "77.00"], [1996, 786, "76.92"], [1978, 797, "76.79"], [1942, 873, "75.59"], [1924, 915, "74.91"], [1888, 975, "74.01"], [1870, 999, "73.64"], [1852, 1059, "72.71", C], [1834, 1155, "71.22", G]],
      ma: {
        box: [985, 370, 919, 180, 1568, 540],
        fast: "g 18,405 38,375 62,352 80,345 92,344 106,312 120,285 136,257 150,248 190,241 210,234 230,219 246,202 264,192|r 264,192 276,190|g 276,190 286,188|r 286,190 296,192|g 296,190 304,186|r 304,186 316,187|g 316,186 356,180|r 356,180 368,184 382,196 398,211|g 398,211 414,209 430,205 442,189 456,178 478,174|r 478,174 530,182|g 530,182 552,181|r 552,181 568,188 584,204 602,218|g 602,218 612,212 628,188 640,180|r 640,180 652,184 674,189 690,199|g 690,199 704,196 714,200|r 714,200 728,211 740,231 752,257 768,277 790,293 818,301 834,309 858,315 870,333 882,363 896,390 910,410|g 910,410 922,407 940,379 954,362 968,350|r 968,348 990,352|g 990,353 1004,352 1014,343|r 1014,345 1024,360 1036,363|g 1036,363 1044,360 1058,336 1078,287 1102,240 1124,210 1144,188|r 1144,188 1170,190 1194,201|g 1194,201 1216,195 1236,170 1246,168|r 1246,168 1280,174 1298,184|g 1298,180 1308,182|r 1308,180 1318,181|g 1318,181 1332,159 1350,118",
        m: "18,422 40,405 62,384 90,370 112,326 142,296 170,277 212,254 246,229 264,218 296,211 304,203 334,200 350,193 368,196 398,209 432,203 458,192 500,188 552,185 568,186 602,206 620,201 630,191 690,199 706,195 720,206 736,220 756,244 774,256 806,276 834,295 860,303 884,340 908,369 926,369 942,361 990,360 1012,352 1022,360 1036,363 1050,350 1070,324 1094,300 1124,252 1144,230 1176,214 1214,210 1236,188 1290,187 1320,188 1336,167 1350,145",
        c: "18,448 30,445 56,421 92,404 120,366 154,334 190,311 226,287 256,261 290,243 318,233 350,218 404,217 436,213 460,205 508,197 556,191 568,192 602,202 624,198 706,198 724,204 748,218 788,242 820,256 860,275 884,300 912,325 950,332 996,343 1012,340 1026,346 1050,345 1070,330 1100,309 1122,290 1144,268 1168,255 1194,246 1238,223 1278,210 1318,204 1336,190 1350,175",
        g: "18,446 40,437 76,424 92,417 126,387 154,370 188,347 224,325 258,303 304,279 356,256 386,248 434,240 460,231 500,222 556,210 604,211 634,204 714,206 738,212 780,225 820,240 860,258 884,275 918,297 950,306 1000,315 1024,325 1060,324 1088,312 1122,296 1164,271 1216,259 1230,247 1318,224 1350,202",
        y: "18,432 40,428 76,416 92,415 126,394 180,370 222,350 262,326 310,303 356,282 398,273 456,257 508,244 560,232 606,231 650,221 706,217 750,223 800,235 860,250 884,265 920,282 954,288 990,300 1040,309 1090,303 1130,290 1180,273 1226,262 1240,252 1318,239 1350,220"
      }
    });

    draw({
      id: "c30", name: "UPRO - 30 min", ox: 280, oy: 540, first: 289, base: 1062, split: 935,
      values: ["83.67", "82.74", "82.08", "81.46", "84.78"],
      prices: scale.map(([p, y]) => [p, y + 540]).concat([["80.00", 989], ["", 998], ["", 1006], ["77.00", 1015], ["", 1023], ["", 1032], ["74.00", 1040], ["", 1049]]),
      dates: days("9/6 9/9 9/10 9/11 9/12 9/13 9/16 9/17 9/18 9/19 9/20", 337, 78).concat([373, 451, 529, 607, 685, 763, 841, 919, 997, 1075].map(x => ["12:00", x, true])),
      vlines: [[450, "9/9/2024 12:00", Y, 400]],
      tags: [[617, "84.74", "#00e800"], [977, "81.46", "#e8e800"], [972, "82.08", "#00ff00"], [949, "84.78", "#0000ff"], [967, "82.74", "#00ffff"], [958, "83.67", "#f000f0"]],
      bars: `826 829 860 867 g,810 822 830 840 g,816 822 850 852 r,768 769 851 852 g,762 768 792 796 r,756 783 786 792 g,786 786 810 840 r,784 801 809 843 g,750 795 852 855 r,840 852 939 942 r,
        924 936 1005 1023 r,915 1002 1025 1038 r,993 1020 1047 1059 r,1036 1050 1068 1071 r,1032 1060 1067 1074 g,1011 1042 1066 1068 g,1036 1042 1049 1068 r,1041 1047 1065 1082 r,1047 1051 1066 1077 g,1014 1027 1049 1053 g,
        1020 1026 1052 1077 r,924 928 943 960 g,900 927 944 945 r,942 942 981 981 r,950 955 980 998 g,909 913 955 957 g,882 886 911 917 g,870 871 886 890 g,864 868 876 882 r,876 876 917 920 r,
        915 918 938 941 r,924 932 935 957 g,909 921 935 954 g,897 899 919 938 g,840 849 864 870 G,855 864 882 927 r,876 882 899 920 r,864 874 901 908 g,864 873 963 963 r,948 957 960 983 g,
        930 934 959 963 g,885 901 935 938 g,879 885 900 903 g,858 862 883 885 g,850 853 862 864 g,838 840 857 860 g,825 837 840 855 g,840 840 950 954 r,944 950 1043 1044 r,1038 1041 1044 1080 r,
        999 1009 1048 1061 g,936 955 1010 1014 g,891 895 959 960 g,873 877 894 902 g,828 835 875 877 g,783 805 836 840 g,778 782 814 816 g,732 763 781 783 g,714 715 763 773 g,660 688 718 753 g,
        663 672 707 738 r,645 652 706 720 g,636 651 693 695 r,627 679 692 702 g,660 675 690 696 r,657 664 689 691 g,612 616 664 675 g,588 595 618 621 g,552 562 596 598 g,555 558 564 585 r,
        552 558 575 633 r,564 570 573 588 g,558 562 571 586 g,504 514 550 558 g,474 507 509 546 g,468 489 509 537 g,480 489 491 498 r,462 466 489 495 g,459 467 500 501 r,480 481 497 506 g,
        462 466 481 483 g,456 462 471 474 r,456 468 503 506 r,489 500 503 513 g,486 490 505 516 g,474 489 491 510 g,462 475 497 522 g,465 474 503 513 r,504 504 525 549 r,498 519 528 540 g,
        504 508 521 531 g,504 505 507 533 g,498 499 506 522 g,489 496 502 513 g,471 472 494 501 g,471 471 473 486 g,468 469 471 495 g,468 468 483 489 r,456 463 481 485 g,387 399 423 432 G,
        369 379 418 430 g,360 375 405 417 r,378 396 398 405 g,396 399 408 413 r,399 408 441 465 r,441 441 495 519 r,459 466 493 503 g,459 468 471 525 r,459 470 473 488 r,465 471 489 509 r,
        478 486 489 509 r,457 458 488 498 g,435 441 465 480 r,453 459 462 486 g,453 459 471 480 r,459 467 474 486 r,471 471 501 503 r,459 463 503 513 g,444 445 464 468 g,441 442 445 465 g,
        426 438 462 468 r,303 382 460 504 g,351 378 437 453 r,381 409 443 504 g,390 402 510 525 r,237 240 281 324 G,228 232 281 288 g,213 231 273 278 r,234 244 272 285 g,237 240 262 270 r,231 232 260 261 g`,
      trend: [[20, 891, 198, 877]],
      exits: [[190, 790, 201, 877]],
      buys: [[514, 899, 872, "132"]],
      dashes: [[20, 873, 5], [495, 1116, 1, M], [963, 1095, 7, C], [1197, 849, 17], [1809, 573, 13], [2277, 480, 2]],
      sts: [[514, 1160, "71.15", G], [982, 1139, "71.45", C], [1216, 893, "75.25"], [1827, 618, "79.51"], [2296, 525, "80.94"]],
      ma: {
        box: [280, 910, 915, 174, 1568, 522],
        fast: "r 14,350 36,359|g 36,359 60,345 84,337|r 84,337 98,341 108,357 120,383 132,408 144,431 156,445 168,450|g 168,450 200,446 222,434 240,409 262,400 280,387 292,378 302,375|r 302,375 318,376 334,385 350,389|g 350,389 376,380 396,376|r 396,376 410,382 426,390|g 426,390 444,388 460,376 476,365 488,357|r 488,357 500,368 514,392 526,412 540,423|g 540,423 554,408 570,384 584,356 600,329 620,302 634,291 660,287|r 660,287 682,291|g 682,291 698,280 718,259 736,248 760,240 784,225 806,213 846,208|r 846,208 880,216 888,216|g 888,216 900,216|r 900,216 932,222 946,225|g 946,225 976,219 996,211 1022,207 1048,188 1066,180|r 1066,180 1084,182 1100,195 1124,211 1144,217|g 1144,217 1190,206|r 1190,206 1214,210|g 1214,210 1248,203 1262,192 1280,189|r 1280,189 1290,196|g 1290,196 1302,184 1314,159 1334,129 1352,118",
        m: "14,337 36,343 60,341 92,340 104,346 126,371 156,406 196,426 222,430 250,415 268,412 290,397 308,388 346,390 390,384 430,386 450,382 470,373 490,372 500,376 520,397 532,403 550,397 570,384 594,365 622,338 650,317 680,307 702,289 718,277 740,267 770,252 806,232 826,229 844,222 906,221 940,227 972,224 1000,218 1026,217 1060,197 1084,196 1100,203 1144,210 1230,211 1262,206 1292,205 1312,180 1352,146",
        c: "14,321 36,328 92,330 104,336 156,376 190,392 222,406 268,402 300,394 350,392 400,384 446,385 490,376 540,395 584,382 622,360 650,343 684,330 720,306 740,300 770,283 806,261 826,257 846,246 900,236 940,235 984,230 1026,222 1070,208 1130,208 1220,209 1290,205 1310,192 1352,169",
        g: "14,303 36,311 98,319 130,335 170,357 222,377 280,383 350,383 440,384 490,378 510,384 540,388 580,381 630,363 684,346 720,328 770,308 810,289 846,274 900,261 960,250 1030,237 1084,223 1180,220 1250,217 1300,210 1330,194 1352,187",
        y: "14,287 36,293 98,304 130,318 170,334 222,352 270,361 308,362 370,367 430,371 500,372 530,379 560,380 610,373 650,359 690,352 720,339 760,325 800,305 846,294 900,280 960,269 1030,257 1090,241 1170,235 1250,227 1300,222 1330,207 1352,202"
      }
    });
  </script>
</body>
</html>
